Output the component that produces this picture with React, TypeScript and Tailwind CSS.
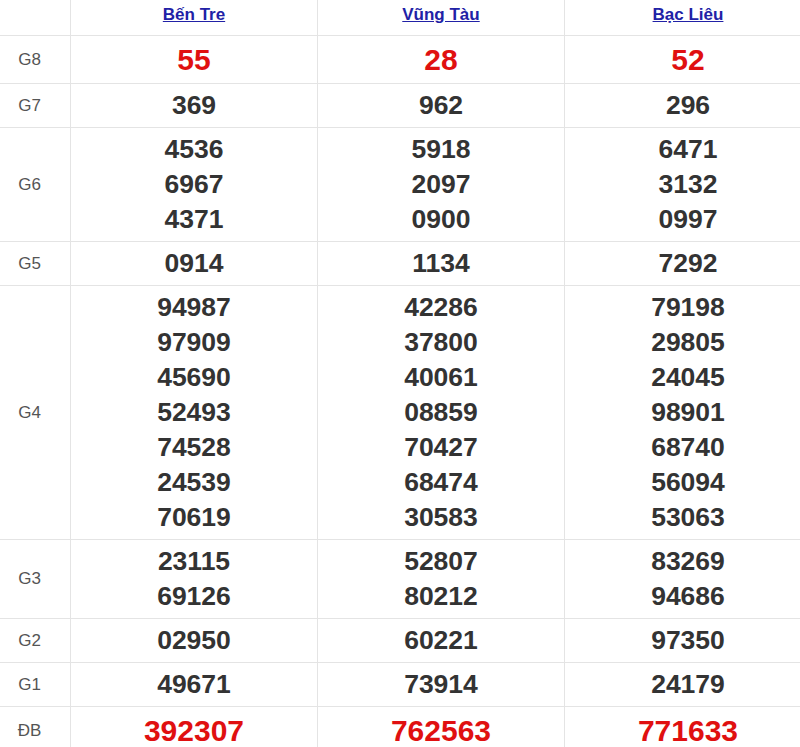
const provinces = ["Bến Tre", "Vũng Tàu", "Bạc Liêu"];

const prizes: { label: string; big?: boolean; values: string[][] }[] = [
  { label: "G8", big: true, values: [["55"], ["28"], ["52"]] },
  { label: "G7", values: [["369"], ["962"], ["296"]] },
  {
    label: "G6",
    values: [
      ["4536", "6967", "4371"],
      ["5918", "2097", "0900"],
      ["6471", "3132", "0997"],
    ],
  },
  { label: "G5", values: [["0914"], ["1134"], ["7292"]] },
  {
    label: "G4",
    values: [
      ["94987", "97909", "45690", "52493", "74528", "24539", "70619"],
      ["42286", "37800", "40061", "08859", "70427", "68474", "30583"],
      ["79198", "29805", "24045", "98901", "68740", "56094", "53063"],
    ],
  },
  {
    label: "G3",
    values: [
      ["23115", "69126"],
      ["52807", "80212"],
      ["83269", "94686"],
    ],
  },
  { label: "G2", values: [["02950"], ["60221"], ["97350"]] },
  { label: "G1", values: [["49671"], ["73914"], ["24179"]] },
  { label: "ĐB", big: true, values: [["392307"], ["762563"], ["771633"]] },
];

export default function App() {
  return (
    <div
      className="w-[800px] overflow-hidden bg-white"
      style={{ fontFamily: '"Liberation Sans", Arial, sans-serif' }}
    >
      <div className="grid w-[812px] grid-cols-[71px_247px_247px_247px]">
        {/* header */}
        <div className="h-[36px] border-b border-r border-[#e4e4e4]" />
        {provinces.map((p) => (
          <div
            key={p}
            className="flex h-[36px] items-start justify-center border-b border-r border-[#e4e4e4] pt-[4px]"
          >
            <a
              href="#"
              className="text-[17px] font-bold leading-[22px] text-[#2121a6] underline"
            >
              {p}
            </a>
          </div>
        ))}

        {prizes.map((row) => (
          <div key={row.label} className="contents">
            <div className="flex items-center justify-center border-b border-r border-[#e4e4e4] pr-[11px] text-[17px] text-[#555]">
              {row.label}
            </div>
            {row.values.map((col, i) => (
              <div
                key={i}
                className={`flex flex-col items-center justify-center border-b border-r border-[#e4e4e4] py-[4px] font-bold ${
                  row.big
                    ? "text-[30px] leading-[39px] text-[#e01010]"
                    : "text-[26.5px] leading-[35px] text-[#333]"
                }`}
              >
                {col.map((n) => (
                  <span key={n}>{n}</span>
                ))}
              </div>
            ))}
          </div>
        ))}
      </div>
    </div>
  );
}
